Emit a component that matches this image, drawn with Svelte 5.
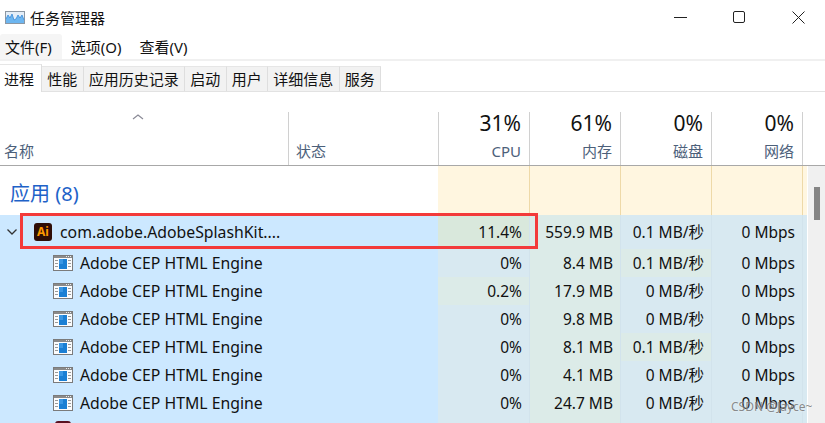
<script>
  const tabs = ['进程', '性能', '应用历史记录', '启动', '用户', '详细信息', '服务'];
  const menus = ['文件(F)', '选项(O)', '查看(V)'];
  const heads = [
    { pct: '31%', name: 'CPU' },
    { pct: '61%', name: '内存' },
    { pct: '0%', name: '磁盘' },
    { pct: '0%', name: '网络' }
  ];
  // hot marks a cell with a stronger heat colour
  const rows = [
    { cpu: '0%', mem: '8.4 MB', disk: '0.1 MB/秒', net: '0 Mbps', diskHot: true },
    { cpu: '0.2%', mem: '17.9 MB', disk: '0 MB/秒', net: '0 Mbps', cpuHot: true },
    { cpu: '0%', mem: '9.8 MB', disk: '0 MB/秒', net: '0 Mbps' },
    { cpu: '0%', mem: '8.1 MB', disk: '0.1 MB/秒', net: '0 Mbps', diskHot: true },
    { cpu: '0%', mem: '4.1 MB', disk: '0 MB/秒', net: '0 Mbps' },
    { cpu: '0%', mem: '24.7 MB', disk: '0 MB/秒', net: '0 Mbps' }
  ];
</script>

<div class="win">
  <header class="title">
    <svg class="logo" width="20" height="13" viewBox="0 0 20 13">
      <rect x="0.5" y="0.5" width="19" height="12" fill="#e4eef8" stroke="#8c97a3" />
      <path d="M1 12V8L3 4L5 7L7 3L9 9L11 8L13 4L15 7L17 4L19 9V12Z" fill="#6db6f0" />
      <path d="M1 8L3 4L5 7L7 3L9 9L11 8L13 4L15 7L17 4L19 9" fill="none" stroke="#3a8ad8" stroke-width="0.8" />
    </svg>
    <span class="title-text">任务管理器</span>
    <div class="controls">
      <svg width="13" height="13" viewBox="0 0 13 13"><path d="M0 6.5H13" stroke="#222" stroke-width="1" fill="none" /></svg>
      <svg width="13" height="13" viewBox="0 0 13 13"><rect x="0.5" y="0.5" width="11" height="11" rx="1.5" stroke="#222" stroke-width="1" fill="none" /></svg>
      <svg width="13" height="13" viewBox="0 0 13 13"><path d="M0.5 0.5L12.5 12.5M12.5 0.5L0.5 12.5" stroke="#222" stroke-width="1" fill="none" /></svg>
    </div>
  </header>

  <nav class="menu">
    {#each menus as m, i}
      <span class="menu-item" class:first={i === 0}>{m}</span>
    {/each}
  </nav>

  <div class="tabs">
    {#each tabs as t, i}
      <span class="tab" class:active={i === 0}>{t}</span>
    {/each}
  </div>

  <div class="head">
    <div class="hcell name">
      <svg class="sort" width="12" height="6" viewBox="0 0 12 6"><path d="M1 5L6 1L11 5" fill="none" stroke="#8a8a96" stroke-width="1.2" /></svg>
      <span class="hlabel">名称</span>
    </div>
    <div class="hcell status"><span class="hlabel">状态</span></div>
    {#each heads as h}
      <div class="hcell num">
        <span class="pct">{h.pct}</span>
        <span class="hlabel">{h.name}</span>
      </div>
    {/each}
  </div>

  <div class="body">
    <div class="list">
      <div class="group">
        <div class="group-name">应用 (8)</div>
        <div class="heat"></div><div class="heat"></div><div class="heat"></div><div class="heat"></div><div class="heat tail"></div>
      </div>

      <div class="row app">
        <div class="cell-name">
          <svg class="chev" width="12" height="8" viewBox="0 0 12 8"><path d="M1.5 1.5L6 6L10.5 1.5" fill="none" stroke="#333" stroke-width="1.3" /></svg>
          <span class="ai">Ai</span>
          <span class="app-name">com.adobe.AdobeSplashKit....</span>
        </div>
        <div class="c hot">11.4%</div>
        <div class="c warm">559.9 MB</div>
        <div class="c">0.1 MB/秒</div>
        <div class="c">0 Mbps</div>
        <div class="c tail"></div>
        <div class="redbox"></div>
      </div>

      {#each rows as r}
        <div class="row">
          <div class="cell-name child">
            <svg class="exe" width="20" height="16" viewBox="0 0 20 16">
              <rect x="0.5" y="0.5" width="19" height="15" fill="#fbfcfd" stroke="#7b7b7b" />
              <rect x="1" y="1" width="18" height="2" fill="#8a8a8a" />
              <rect x="13" y="1" width="1" height="1" fill="#eee" />
              <rect x="15" y="1" width="1" height="1" fill="#eee" />
              <rect x="17" y="1" width="1" height="1" fill="#eee" />
              <path d="M2 5.5H5M2 8.5H5M2 11.5H5M15 5.5H18M15 8.5H18M15 11.5H18" stroke="#9a9a9a" stroke-width="1" fill="none" />
              <rect x="6" y="4" width="8" height="10" fill="#1a7fd4" />
              <rect x="6" y="4" width="4" height="5" fill="#3a97e4" />
            </svg>
            <span>Adobe CEP HTML Engine</span>
          </div>
          <div class="c" class:warm={r.cpuHot}>{r.cpu}</div>
          <div class="c warm">{r.mem}</div>
          <div class="c" class:warm={r.diskHot}>{r.disk}</div>
          <div class="c">{r.net}</div>
          <div class="c tail"></div>
        </div>
      {/each}

      <div class="row">
        <div class="cell-name child top"><span class="cut"></span></div>
        <div class="c"></div><div class="c warm"></div><div class="c"></div><div class="c"></div><div class="c tail"></div>
      </div>
    </div>
    <div class="scroll"><div class="thumb"></div></div>
  </div>

  <span class="mark">CSDN @Jayce~</span>
</div>

<style>
  :global(body) {
    margin: 0;
    background: #fff;
    overflow: hidden;
  }

  .win {
    position: relative;
    width: 825px;
    height: 423px;
    overflow: hidden;
    background: #fff;
    color: #111;
    font-family: "Noto Sans", "Noto Sans CJK SC", sans-serif;
    font-size: 15px;
  }

  .title {
    height: 34px;
    display: flex;
    align-items: center;
    padding-left: 5px;
    gap: 5px;
  }
  .controls {
    margin-left: auto;
    display: flex;
    gap: 46px;
    padding-right: 20px;
  }

  .menu {
    height: 27px;
    box-sizing: border-box;
    display: flex;
    border-bottom: 2px solid #f0f0f0;
  }
  .menu-item {
    padding: 0 18px 0 0;
    line-height: 27px;
  }
  .menu-item.first {
    background: #f5f5f5;
    border-radius: 3px 3px 0 0;
    padding: 0 10px 0 5px;
    margin-right: 9px;
  }

  .tabs {
    height: 31px;
    display: flex;
    align-items: flex-end;
    border-bottom: 1px solid #e2e2e2;
    box-sizing: border-box;
  }
  .tab {
    height: 25px;
    box-sizing: border-box;
    line-height: 25px;
    padding: 0 5.25px;
    background: #f2f2f2;
    border-right: 1px solid #dedede;
    border-top: 1px solid #e6e6e6;
  }
  .tab.active {
    height: 28px;
    line-height: 28px;
    background: #fff;
    padding: 0 7px 0 4px;
    margin-bottom: -1px;
  }

  .head {
    margin-top: 20px;
    height: 54px;
    display: grid;
    grid-template-columns: 289px 150px 91px 91px 91px 91px;
    border-bottom: 1px solid #a8a8a8;
    box-sizing: border-box;
  }
  .hcell {
    border-right: 1px solid #d0d0d0;
    position: relative;
    display: flex;
    flex-direction: column;
    justify-content: flex-end;
    padding-bottom: 4px;
    box-sizing: border-box;
  }
  .hlabel {
    font-size: 15px;
    color: #4c607a;
    line-height: 20px;
  }
  .name {
    padding-left: 4px;
  }
  .sort {
    position: absolute;
    left: 132px;
    top: 2px;
  }
  .status {
    padding-left: 7px;
  }
  .num {
    text-align: right;
    padding-right: 8px;
  }
  .pct {
    font-size: 21px;
    line-height: 22px;
    color: #111;
    margin-bottom: 7px;
  }

  .body {
    display: flex;
    height: 258px;
  }
  .list {
    width: 807px;
    margin-right: 1px;
  }
  .scroll {
    width: 17px;
    background: #f0f0f0;
    position: relative;
  }
  .thumb {
    position: absolute;
    left: 6px;
    top: 21px;
    width: 6px;
    height: 33px;
    background: #858585;
  }

  .group {
    height: 49px;
    display: grid;
    grid-template-columns: 438px 92px 91px 91px 91px 4px;
  }
  .group-name {
    color: #1e62c8;
    font-size: 20px;
    padding-left: 10px;
    line-height: 55px;
  }
  .heat {
    background: #fff6e0;
    border-right: 1px solid #eed9a8;
  }
  .heat.tail {
    border-right: 0;
  }

  .row {
    position: relative;
    height: 28px;
    display: grid;
    grid-template-columns: 438px 92px 91px 91px 91px 4px;
    align-items: stretch;
    background: #cce8ff;
    line-height: 28px;
    font-size: 15.8px;
  }
  .row.app {
    height: 34px;
    line-height: 34px;
  }
  .cell-name {
    display: flex;
    align-items: center;
    white-space: nowrap;
  }
  .chev {
    margin: 0 10px 0 6px;
  }
  .ai {
    width: 18px;
    height: 18px;
    border-radius: 3px;
    background: #2f0e08;
    color: #ff9a00;
    font-size: 12px;
    font-weight: 700;
    line-height: 18px;
    text-align: center;
    margin-right: 8px;
    margin-left: 6px;
  }
  .child {
    padding-left: 53px;
  }
  .child.top {
    align-items: flex-start;
  }
  .cut {
    width: 16px;
    height: 18px;
    margin: 4px 0 0 2px;
    border-radius: 3px;
    background: #5a1020;
  }
  .exe {
    margin-right: 7px;
  }
  .c {
    text-align: right;
    padding-right: 7px;
    background: #d8e9f1;
    border-right: 1px solid #d2e3ec;
    box-sizing: border-box;
    white-space: nowrap;
    font-size: 15.5px;
  }
  .c.warm {
    background: #dcebe8;
  }
  .c.hot {
    background: #d9e8dc;
  }
  .c.tail {
    padding: 0;
    border-right: 0;
  }
  .redbox {
    position: absolute;
    left: 20px;
    top: -2px;
    width: 518px;
    height: 36px;
    box-sizing: border-box;
    border: 3px solid #f33a3a;
    pointer-events: none;
  }
  .mark {
    position: absolute;
    left: 731px;
    top: 398px;
    font-size: 12px;
    color: rgba(110, 110, 110, 0.8);
    text-shadow: 0 0 2px rgba(255, 255, 255, 0.8);
  }
</style>
